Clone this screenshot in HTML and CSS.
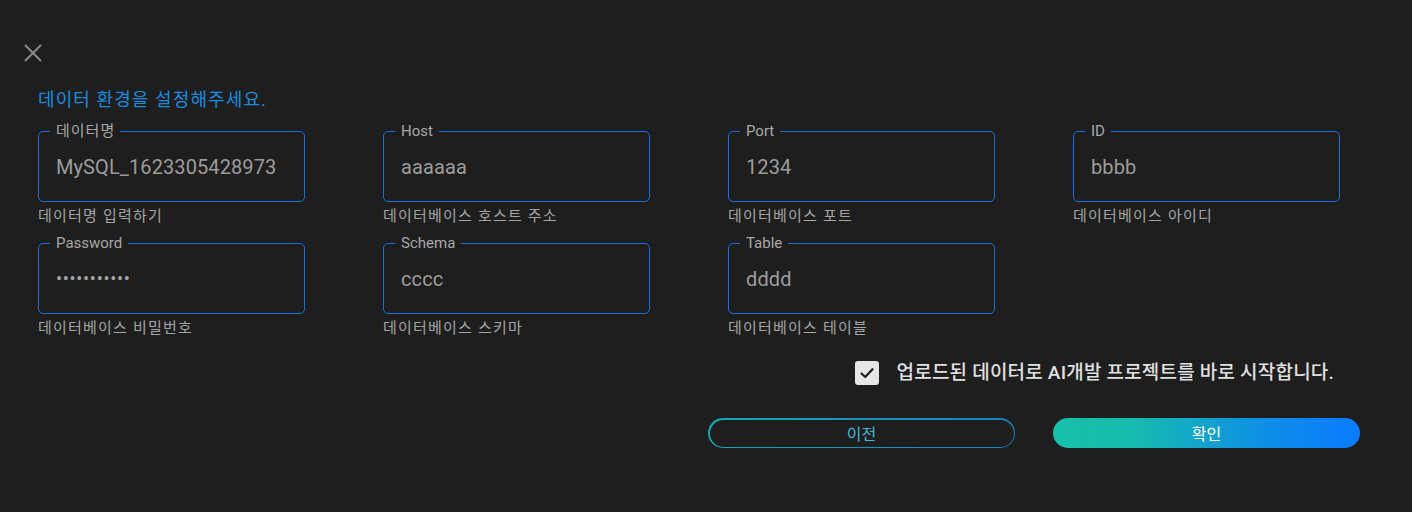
FILE: index.html
```html
<!DOCTYPE html>
<html lang="ko">
<head>
<meta charset="utf-8">
<link rel="stylesheet" href="styles.css">
</head>
<body>
<div class="dialog">
  <button class="close" aria-label="닫기">
    <svg width="20" height="20" viewBox="0 0 20 20"><path d="M2 2 L18 18 M18 2 L2 18" stroke="#8a8a8a" stroke-width="2" fill="none"/></svg>
  </button>
  <h2 class="title">데이터 환경을 설정해주세요.</h2>
  <div class="grid">
    <div class="cell">
      <div class="field"><span class="label ko">데이터명</span><span class="value">MySQL_1623305428973</span></div>
      <div class="help">데이터명 입력하기</div>
    </div>
    <div class="cell">
      <div class="field"><span class="label">Host</span><span class="value">aaaaaa</span></div>
      <div class="help">데이터베이스 호스트 주소</div>
    </div>
    <div class="cell">
      <div class="field"><span class="label">Port</span><span class="value">1234</span></div>
      <div class="help">데이터베이스 포트</div>
    </div>
    <div class="cell">
      <div class="field"><span class="label">ID</span><span class="value">bbbb</span></div>
      <div class="help">데이터베이스 아이디</div>
    </div>
    <div class="cell">
      <div class="field"><span class="label">Password</span><span class="value pw">•••••••••••</span></div>
      <div class="help">데이터베이스 비밀번호</div>
    </div>
    <div class="cell">
      <div class="field"><span class="label">Schema</span><span class="value">cccc</span></div>
      <div class="help">데이터베이스 스키마</div>
    </div>
    <div class="cell">
      <div class="field"><span class="label">Table</span><span class="value">dddd</span></div>
      <div class="help">데이터베이스 테이블</div>
    </div>
  </div>
  <label class="check-row">
    <span class="checkbox"><svg width="16" height="16" viewBox="0 0 16 16"><path d="M2.5 8.5 L6.2 12 L13.5 4.2" stroke="#1e1e1e" stroke-width="2.2" fill="none" stroke-linecap="round" stroke-linejoin="round"/></svg></span>
    <span class="check-text">업로드된 데이터로 AI개발 프로젝트를 바로 시작합니다.</span>
  </label>
  <div class="actions">
    <button class="btn btn-prev"><span>이전</span></button>
    <button class="btn btn-ok">확인</button>
  </div>
</div>
</body>
</html>
```

FILE: styles.css
```css
html, body {
  margin: 0;
  padding: 0;
  background: #1e1e1e;
}
body {
  font-family: Roboto, "Noto Sans CJK KR", sans-serif;
  width: 1412px;
  height: 512px;
  overflow: hidden;
}
.dialog {
  padding: 0 52px 0 38px;
}
.close {
  display: block;
  margin: 43px 0 0 -15px;
  padding: 0;
  width: 20px;
  height: 20px;
  background: none;
  border: 0;
}
.close svg { display: block; }
.title {
  margin: 25px 0 0;
  font-size: 18px;
  line-height: 24px;
  font-weight: 400;
  letter-spacing: 1.1px;
  color: #1a8ce0;
}
.grid {
  margin-top: 19px;
  display: grid;
  grid-template-columns: repeat(4, 267px);
  column-gap: 78px;
  row-gap: 18px;
}
.field {
  position: relative;
  box-sizing: border-box;
  height: 71px;
  border: 1px solid #1670e0;
  border-radius: 5px;
  display: flex;
  align-items: center;
  padding-left: 17px;
}
.label {
  position: absolute;
  top: -10px;
  left: 11px;
  padding: 0 6px;
  background: #1e1e1e;
  font-size: 15px;
  line-height: 18px;
  color: #a8a8a8;
}
.label.ko {
  letter-spacing: 1px;
  padding-right: 5px;
}
.value {
  font-size: 20px;
  color: #9c9c9c;
  letter-spacing: 0.1px;
}
.value.pw {
  font-size: 18px;
  letter-spacing: 0.7px;
  color: #a4a4a4;
}
.help {
  margin-top: 5px;
  font-size: 15px;
  line-height: 18px;
  letter-spacing: 1.2px;
  color: #a4a4a4;
}
.check-row {
  margin-top: 24px;
  display: flex;
  align-items: center;
  justify-content: flex-end;
  padding-right: 26px;
  gap: 18px;
}
.checkbox {
  width: 24px;
  height: 24px;
  border-radius: 3px;
  background: #e6e6e6;
  display: flex;
  align-items: center;
  justify-content: center;
}
.check-text {
  font-size: 19px;
  line-height: 24px;
  letter-spacing: 0.2px;
  color: #e0e0e0;
  font-weight: 500;
}
.actions {
  margin-top: 33px;
  display: flex;
  justify-content: flex-end;
  gap: 38px;
}
.btn {
  width: 307px;
  height: 30px;
  border-radius: 15px;
  border: 0;
  padding: 0;
  font-family: Roboto, "Noto Sans CJK KR", sans-serif;
  font-size: 16px;
  cursor: pointer;
}
.btn-prev {
  padding: 1.5px;
  background: linear-gradient(90deg, #18a7b0, #1784c8);
}
.btn-prev span {
  display: flex;
  align-items: center;
  justify-content: center;
  height: 100%;
  border-radius: 14px;
  background: #1e1e1e;
  color: #45b6d6;
}
.btn-ok {
  background: linear-gradient(90deg, #17c1a9 0%, #17bcae 25%, #0d8ee8 70%, #0a7aff 100%);
  color: #ffffff;
}
```
